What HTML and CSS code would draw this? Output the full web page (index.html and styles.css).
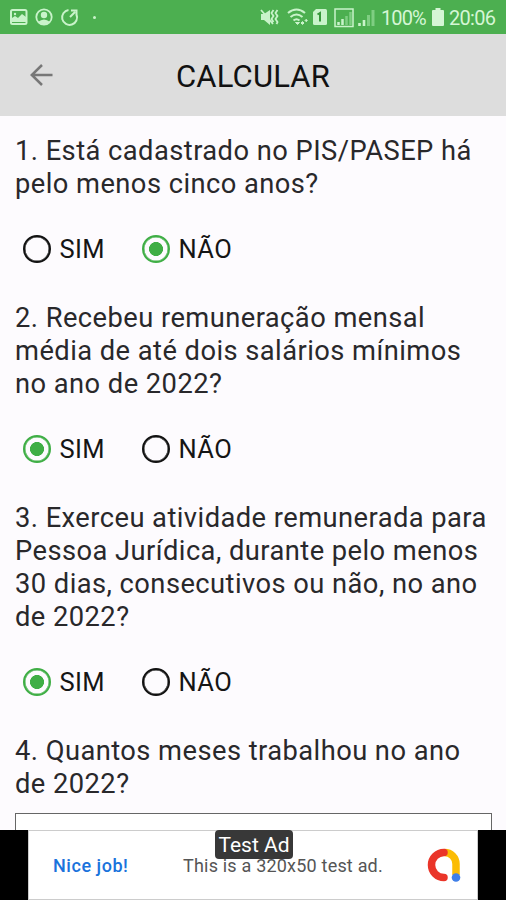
FILE: index.html
```html
<!DOCTYPE html>
<html lang="pt-BR">
<head>
<meta charset="utf-8">
<title>Calcular</title>
<link rel="stylesheet" href="styles.css">
</head>
<body>
<div class="screen">
  <div class="status">
    <svg class="status-left" width="100" height="34" viewBox="0 0 100 34" fill="none" stroke="#c9f3ca" stroke-width="2">
      <rect x="11" y="10" width="15.5" height="14" rx="1.5"/>
      <path d="M12 22v-4l3-2 3 2 4-4 4 3v5z" fill="#c9f3ca" stroke="none"/>
      <circle cx="15" cy="14" r="1.2" fill="#c9f3ca" stroke="none"/>
      <circle cx="44" cy="17" r="7.7" stroke-width="1.8"/>
      <circle cx="44" cy="15" r="3.2" fill="#c9f3ca" stroke="none"/>
      <path d="M38 22q6-5 12 0-6 5-12 0z" fill="#c9f3ca" stroke="none"/>
      <path d="M68.500 10a7.500 7.500 0 1 0 8 4.500M70 17l5-5M71 10.500h5.500v5"/>
      <circle cx="94.500" cy="17.500" r="1.500" fill="#c9f3ca" stroke="none"/>
    </svg>
    <div class="status-right">
      <svg width="120" height="34" viewBox="258 0 120 34" fill="none" stroke="#c9f3ca" stroke-width="1.8">
        <path d="M261 14h3l6-4v15l-6-5h-3z" fill="#c9f3ca" stroke="none"/>
        <path d="M261 10l12 14M273.500 10l-2 3 2 3-2 3 2 3M277.500 10l-2 3 2 3-2 3 2 3-1 2"/>
        <path d="M288 13q8.500-7 17 0M290.500 17q6-5 12 0M293.500 20.500q3-2.500 6 0" stroke-width="2.100"/>
        <path d="M295.500 22.500l2 2 2-2zM301 23l1.500-1.500L304 23l-1.500 1.500zM305 20.500l1.200-1.200 1.200 1.200-1.200 1.200z" fill="#c9f3ca" stroke-width="1"/>
        <path d="M316 9h9.500q1.500 0 1.500 1.500v13q0 1.500-1.500 1.500h-11q-1.500 0-1.500-1.500V12z" fill="#c9f3ca" stroke="none"/>
        <path d="M317.500 14.500l2.500-1.500v8.500" stroke="#37983a" stroke-width="2"/>
        <rect x="335" y="9" width="18" height="17.500" stroke-width="1.500"/>
        <path d="M338.500 25v-3M342.500 25v-6" stroke-width="2.500"/>
        <path d="M346.500 25V16M350.500 25V12" stroke="#7fce82" stroke-width="2.500"/>
        <path d="M359.500 26v-3M364 26v-6" stroke-width="2.600"/>
        <path d="M368.500 26V15M373 26V10" stroke="#7fce82" stroke-width="3"/>
      </svg>
      <span class="percent">100%</span>
      <svg class="battery" width="12" height="18" viewBox="0 0 12 18"><path d="M3.500 0h5v2H11q1 0 1 1v14q0 1-1 1H1q-1 0-1-1V3q0-1 1-1h2.500z" fill="#d5f6d5"/></svg>
      <span class="clock">20:06</span>
    </div>
  </div>
  <header class="bar">
    <svg class="back" width="24" height="24" viewBox="0 0 24 24" fill="none" stroke="#777" stroke-width="2.500"><path d="M23.500 12H2.500M13 2L2.800 12 13 22"/></svg>
    <h1>CALCULAR</h1>
  </header>
  <main>
    <p class="question">1. Está cadastrado no PIS/PASEP há<br>pelo menos cinco anos?</p>
    <div class="options"><label><i class="radio"></i>SIM</label><label><i class="radio on"></i>NÃO</label></div>
    <p class="question">2. Recebeu remuneração mensal<br>média de até dois salários mínimos<br>no ano de 2022?</p>
    <div class="options"><label><i class="radio on"></i>SIM</label><label><i class="radio"></i>NÃO</label></div>
    <p class="question">3. Exerceu atividade remunerada para<br>Pessoa Jurídica, durante pelo menos<br>30 dias, consecutivos ou não, no ano<br>de 2022?</p>
    <div class="options"><label><i class="radio on"></i>SIM</label><label><i class="radio"></i>NÃO</label></div>
    <p class="question">4. Quantos meses trabalhou no ano<br>de 2022?</p>
    <div class="field"></div>
  </main>
  <footer class="ad-strip">
    <div class="ad">
      <span class="nice">Nice job!</span>
      <span class="copy">This is a 320x50 test ad.</span>
      <svg class="logo" width="38" height="36" viewBox="0 0 38 36" fill="none" stroke-linecap="round" stroke-width="7.500">
        <path d="M20.500 5.500C27 5.500 32 10.500 32 17v11" stroke="#fbbc04" stroke-linecap="butt"/>
        <path d="M20 5.500a12.500 12.500 0 1 0 0 25" stroke="#ea3529"/>
        <circle cx="32" cy="30.500" r="4.300" fill="#3f7fe8"/>
      </svg>
      <span class="badge">Test Ad</span>
    </div>
  </footer>
</div>
</body>
</html>
```
FILE: styles.css
```css
body { margin: 0; font-family: Roboto, sans-serif; }
.screen { width: 506px; height: 900px; overflow: hidden; display: flex; flex-direction: column; background: #fdfbfe; }
.status { height: 34px; flex: none; background: #4caf50; display: flex; justify-content: space-between; color: #d5f6d5; }
.status svg { display: block; }
.status-right { display: flex; align-items: center; width: 248px; font-size: 20px; line-height: 34px; white-space: nowrap; }
.percent { width: 51px; margin-left: 3px; letter-spacing: -.9px; }
.status-right .percent, .clock { padding-top: 1px; }
.battery { flex: none; }
.clock { margin-left: 5px; letter-spacing: -.7px; }
.bar { height: 82px; flex: none; background: #ddd; display: flex; align-items: center; box-sizing: border-box; padding-left: 29px; }
.back { flex: none; }
.bar h1 { margin: 4px 0 0 123px; font-size: 31px; font-weight: 400; line-height: 38px; letter-spacing: .15px; color: #111; white-space: nowrap; }
main { flex: 1; min-height: 0; overflow: hidden; padding: 19px 14px 0 15px; }
.question { margin: 0; font-size: 27.300px; line-height: 33px; letter-spacing: .45px; color: #29282b; white-space: nowrap; }
.options { height: 101px; display: flex; align-items: center; gap: 37px; padding: 0 0 5px 8px; box-sizing: border-box; color: #151515; font-size: 25.500px; letter-spacing: .4px; }
.options label { display: flex; align-items: center; gap: 8.500px; }
.options label:first-child { width: 82px; }
.radio { width: 28px; height: 28px; box-sizing: border-box; border: 2.500px solid #111; border-radius: 50%; box-shadow: inset 0 0 0 .5px #111; }
.radio.on { border-color: #3fae45; box-shadow: inset 0 0 0 .5px #3fae45; background: radial-gradient(circle, #3fae45 0 6.700px, transparent 7.300px); }
.field { height: 60px; margin-top: 12px; border: 1px solid #666; background: #fff; }
.ad-strip { height: 70px; flex: none; background: #000; padding: 0 28px; }
.ad { position: relative; height: 70px; box-sizing: border-box; background: #fff; border: 1px solid #ccc; display: flex; align-items: center; }
.nice { width: 130px; margin-left: 24px; color: #1a73dc; font-size: 18px; font-weight: 500; letter-spacing: .55px; }
.copy { width: 241px; color: #555; font-size: 18px; letter-spacing: .2px; white-space: nowrap; }
.logo { flex: none; }
.badge { position: absolute; left: 186px; top: -1px; width: 78px; height: 29px; border-radius: 4px; background: #383838; color: #fff; font-size: 21px; line-height: 31px; text-align: center; white-space: nowrap; }
```
